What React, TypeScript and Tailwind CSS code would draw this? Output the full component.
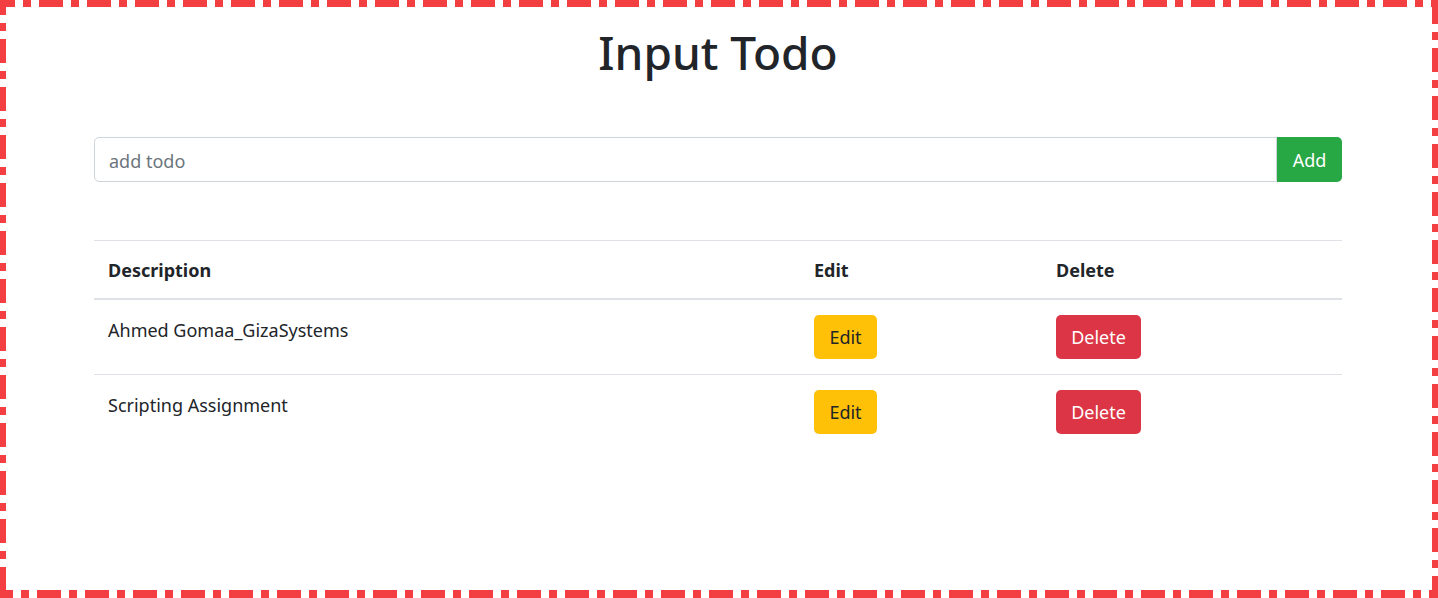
import React from "react";

const rows = ["Ahmed Gomaa_GizaSystems", "Scripting Assignment"];

function Frame() {
  return (
    <svg
      className="pointer-events-none absolute inset-0"
      width="1438"
      height="598"
      viewBox="0 0 1438 598"
    >
      <g stroke="#f43f42" fill="none">
        <line x1="0" y1="3.5" x2="1438" y2="3.5" strokeWidth="7" strokeDasharray="24 8 8 8" strokeDashoffset="9" />
        <line x1="3" y1="0" x2="3" y2="598" strokeWidth="6" strokeDasharray="24 8 8 8" strokeDashoffset="9" />
        <line x1="1435" y1="0" x2="1435" y2="598" strokeWidth="6" strokeDasharray="24 8 8 8" strokeDashoffset="0" />
        <line x1="0" y1="594" x2="1438" y2="594" strokeWidth="8" strokeDasharray="24 8 8 8" strokeDashoffset="11" />
      </g>
    </svg>
  );
}

export default function App() {
  return (
    <div className="relative h-[598px] w-[1438px] overflow-hidden bg-white font-['Noto_Sans',sans-serif] text-[#212529]">
      <Frame />
      <div className="ml-[94px] flex w-[1248px] flex-col">
        <h1 className="mt-[25px] text-center text-[46px] font-medium leading-[55px]">Input Todo</h1>
        <div className="mt-[57px] flex h-[45px]">
          <input
            className="h-full flex-1 rounded-l-[5px] border border-[#ced4da] px-[14px] pt-[2px] text-[18px] text-[#495057] outline-none placeholder:text-[#6c757d]"
            placeholder="add todo"
          />
          <button className="h-full w-[65px] rounded-r-[5px] bg-[#28a745] pt-[1px] text-[18px] text-white">Add</button>
        </div>
        <div className="mt-[58px] border-t border-[#dee2e6]">
          <div className="grid grid-cols-[706px_242px_300px] border-b-2 border-[#dee2e6] text-[18px] font-bold leading-[27px]">
            <div className="px-[14px] pb-[14px] pt-[16px]">Description</div>
            <div className="px-[14px] pb-[14px] pt-[16px]">Edit</div>
            <div className="px-[14px] pb-[14px] pt-[16px]">Delete</div>
          </div>
          {rows.map((r, i) => (
            <div
              key={r}
              className={
                "grid grid-cols-[706px_242px_300px] text-[18px] leading-[27px] " +
                (i === 0 ? "border-b border-[#dee2e6]" : "")
              }
            >
              <div className="px-[14px] pb-[13px] pt-[17px]">{r}</div>
              <div className="px-[14px] py-[15px]">
                <button className="h-[44px] w-[63px] rounded-[5px] bg-[#ffc107] pt-[1px] text-[18px] text-[#212529]">Edit</button>
              </div>
              <div className="px-[14px] py-[15px]">
                <button className="h-[44px] w-[85px] rounded-[5px] bg-[#dc3545] pt-[1px] text-[18px] text-white">Delete</button>
              </div>
            </div>
          ))}
        </div>
      </div>
    </div>
  );
}
